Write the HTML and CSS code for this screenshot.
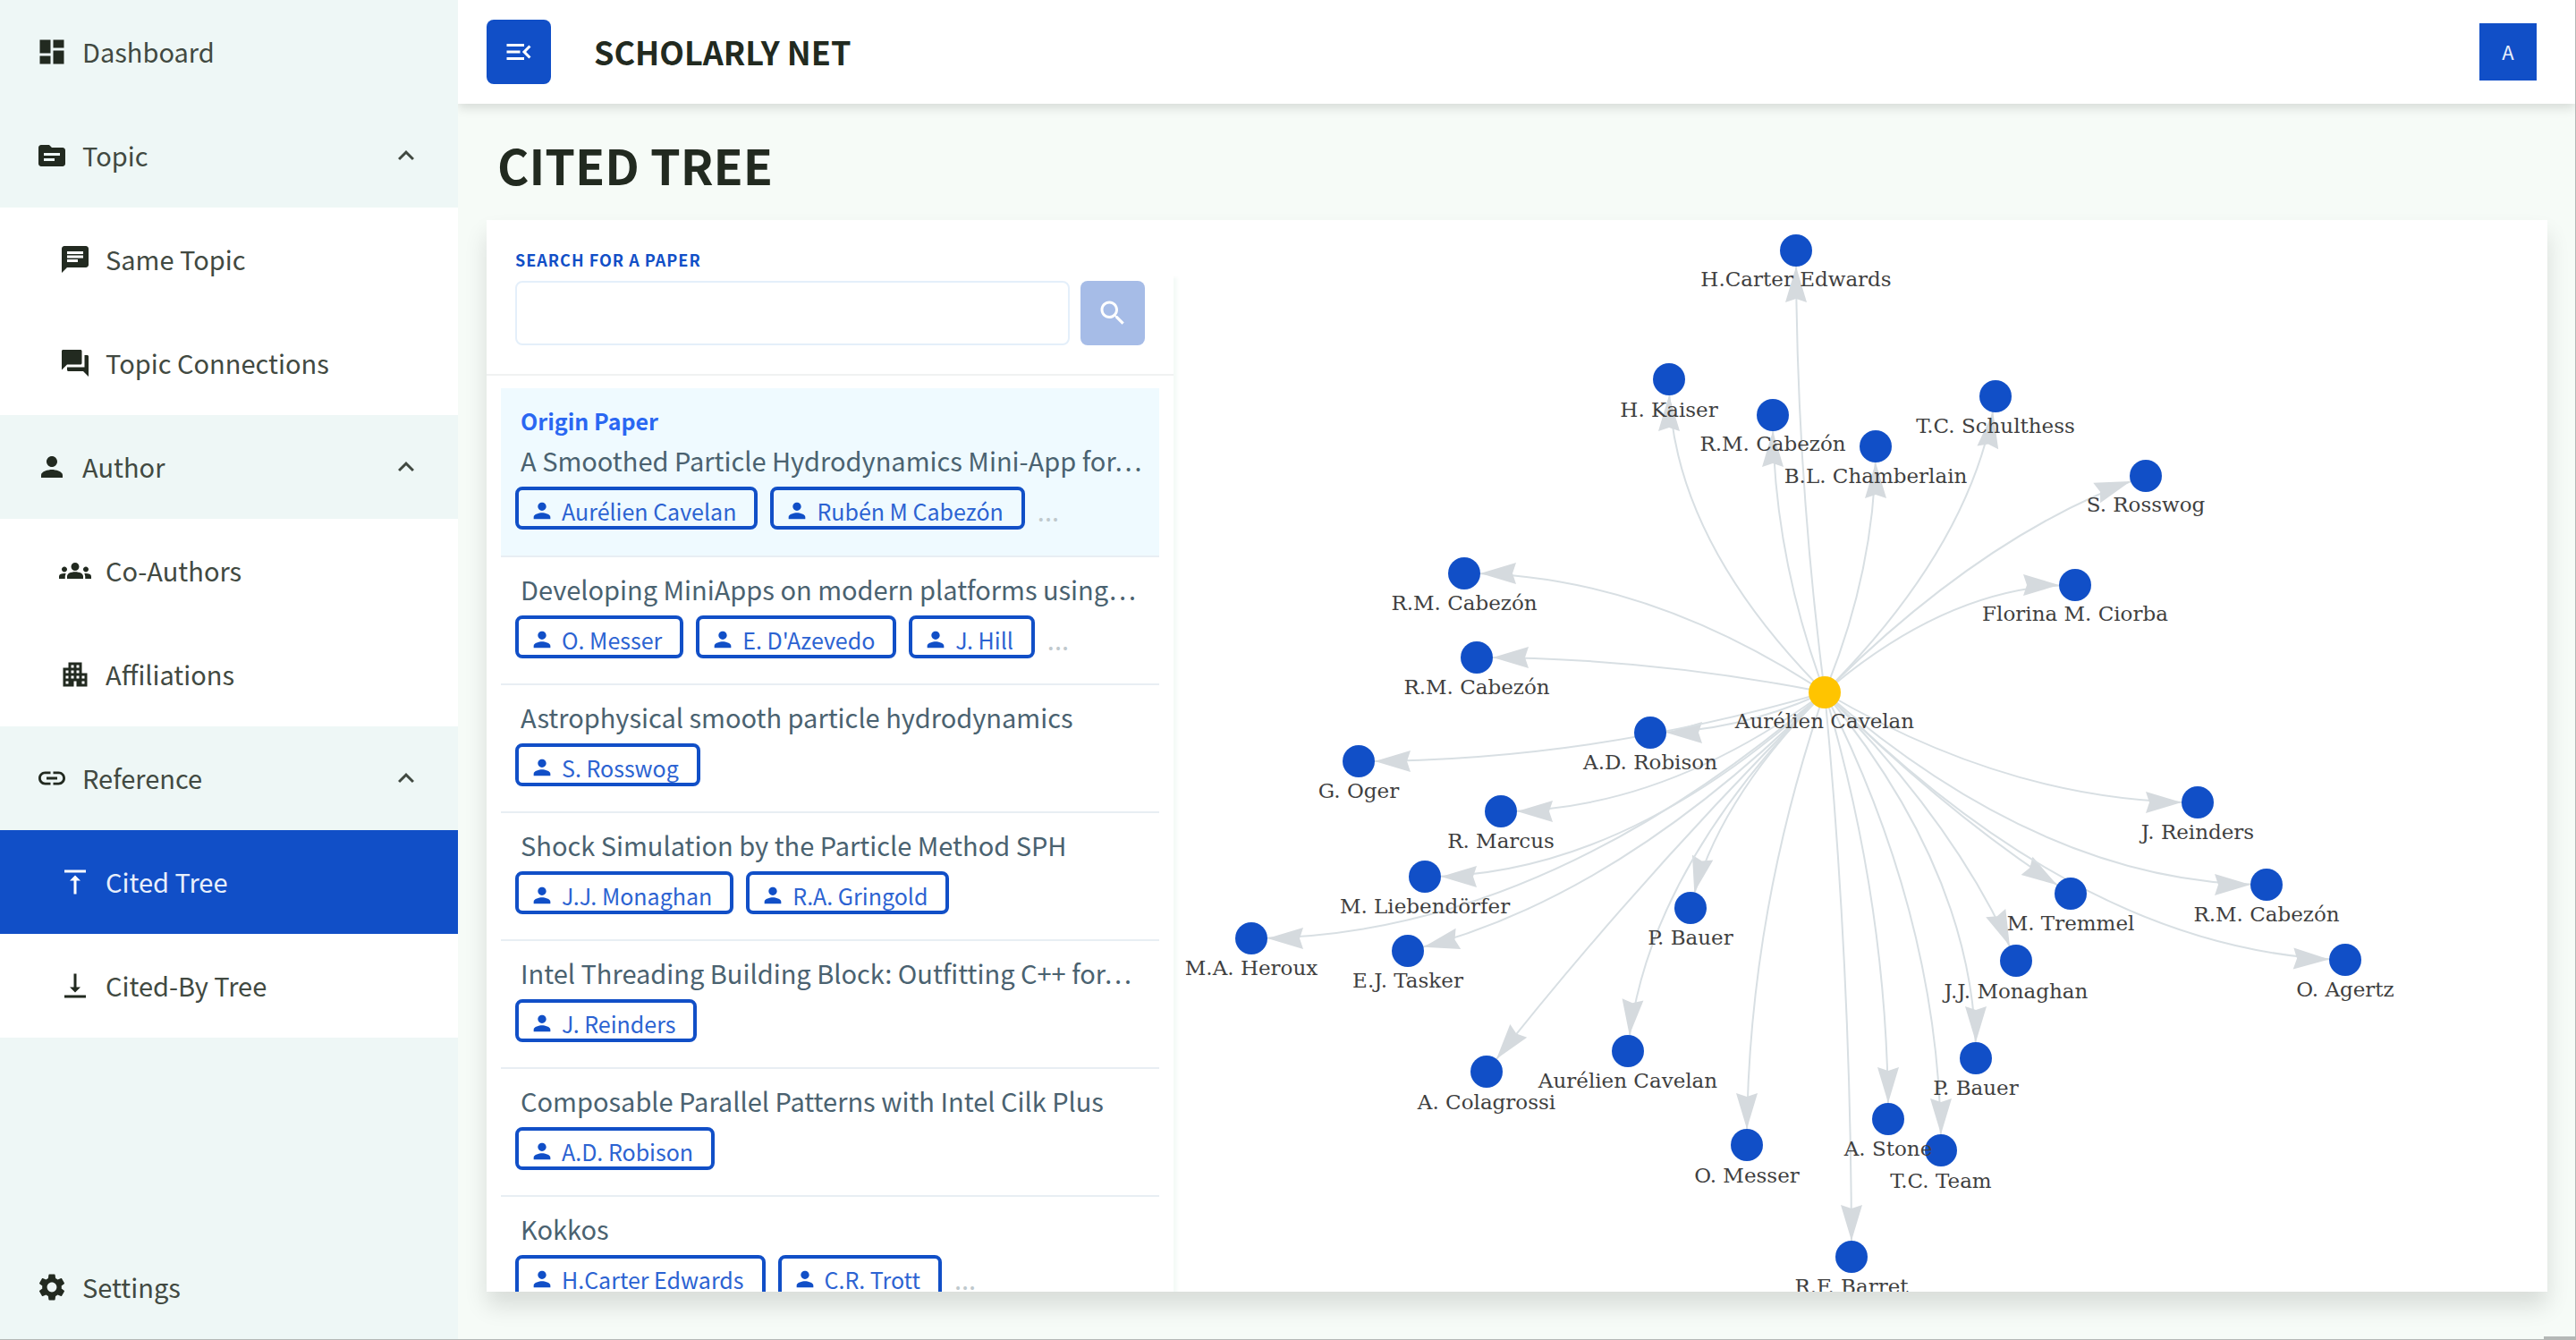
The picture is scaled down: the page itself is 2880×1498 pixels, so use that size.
FILE: index.html
```html
<!DOCTYPE html>
<html lang="en">
<head>
<meta charset="utf-8">
<meta name="viewport" content="width=device-width, initial-scale=1">
<title>Scholarly Net - Cited Tree</title>
<link rel="stylesheet" href="styles.css">
</head>
<body>
<svg class="sprite" aria-hidden="true">
  <symbol id="i-person" viewBox="0 0 24 24"><path d="M12 12c2.21 0 4-1.79 4-4s-1.79-4-4-4-4 1.79-4 4 1.79 4 4 4zm0 2c-2.67 0-8 1.34-8 4v2h16v-2c0-2.660-5.330-4-8-4z"/></symbol>
  <symbol id="i-up" viewBox="0 0 24 24"><path d="M7.410 15.410 12 10.830l4.590 4.580L18 14l-6-6-6 6z"/></symbol>
</svg>

<nav class="sidebar" aria-label="Main">
  <a class="item" href="#dashboard"><svg class="icon" viewBox="0 0 24 24"><path d="M3 13h8V3H3v10zm0 8h8v-6H3v6zm10 0h8V11h-8v10zm0-18v6h8V3h-8z"/></svg><span>Dashboard</span></a>

  <button class="item" type="button" aria-expanded="true"><svg class="icon" viewBox="0 0 24 24"><path d="M20 6h-8l-2-2H4c-1.100 0-1.990.9-1.990 2L2 18c0 1.100.9 2 2 2h16c1.100 0 2-.9 2-2V8c0-1.100-.9-2-2-2zm-6 10H6v-2h8v2zm4-4H6v-2h12v2z"/></svg><span>Topic</span><svg class="chevron"><use href="#i-up"/></svg></button>
  <div class="group">
    <a class="item sub" href="#same-topic"><svg class="icon" viewBox="0 0 24 24"><path d="M20 2H4c-1.100 0-1.990.9-1.990 2L2 22l4-4h14c1.100 0 2-.9 2-2V4c0-1.100-.9-2-2-2zm-6 12H6v-2h8v2zm4-3H6V9h12v2zm0-3H6V6h12v2z"/></svg><span>Same Topic</span></a>
    <a class="item sub" href="#topic-connections"><svg class="icon" viewBox="0 0 24 24"><path d="M21 6h-2v9H6v2c0 .55.45 1 1 1h11l4 4V7c0-.55-.45-1-1-1zm-4 6V3c0-.55-.45-1-1-1H3c-.55 0-1 .45-1 1v14l4-4h10c.55 0 1-.45 1-1z"/></svg><span>Topic Connections</span></a>
  </div>

  <button class="item" type="button" aria-expanded="true"><svg class="icon"><use href="#i-person"/></svg><span>Author</span><svg class="chevron"><use href="#i-up"/></svg></button>
  <div class="group">
    <a class="item sub" href="#co-authors"><svg class="icon" viewBox="0 0 24 24"><path d="M12 12.750c1.630 0 3.070.390 4.240.9 1.080.480 1.760 1.560 1.760 2.730V18H6v-1.610c0-1.180.68-2.260 1.760-2.730 1.170-.52 2.610-.91 4.240-.91zM4 13c1.100 0 2-.9 2-2s-.9-2-2-2-2 .9-2 2 .9 2 2 2zm1.130 1.100C4.760 14.040 4.390 14 4 14c-.99 0-1.930.21-2.780.58C.48 14.900 0 15.620 0 16.430V18h4.500v-1.610c0-.83.23-1.610.63-2.290zM20 13c1.100 0 2-.9 2-2s-.9-2-2-2-2 .9-2 2 .9 2 2 2zm4 3.430c0-.81-.48-1.530-1.220-1.850C21.930 14.210 20.990 14 20 14c-.39 0-.76.040-1.130.1.4.68.63 1.460.63 2.290V18H24v-1.570zM12 6c1.660 0 3 1.340 3 3s-1.340 3-3 3-3-1.340-3-3 1.340-3 3-3z"/></svg><span>Co-Authors</span></a>
    <a class="item sub" href="#affiliations"><svg class="icon" viewBox="0 0 24 24"><path d="M17 11V3H7v4H3v14h8v-4h2v4h8V11h-4zM7 19H5v-2h2v2zm0-4H5v-2h2v2zm0-4H5V9h2v2zm4 4H9v-2h2v2zm0-4H9V9h2v2zm0-4H9V5h2v2zm4 8h-2v-2h2v2zm0-4h-2V9h2v2zm0-4h-2V5h2v2zm4 12h-2v-2h2v2zm0-4h-2v-2h2v2z"/></svg><span>Affiliations</span></a>
  </div>

  <button class="item" type="button" aria-expanded="true"><svg class="icon" viewBox="0 0 24 24"><path d="M3.900 12c0-1.710 1.390-3.100 3.100-3.100h4V7H7c-2.760 0-5 2.240-5 5s2.240 5 5 5h4v-1.900H7c-1.710 0-3.100-1.390-3.100-3.100zM8 13h8v-2H8v2zm9-6h-4v1.900h4c1.710 0 3.100 1.390 3.100 3.100s-1.390 3.100-3.100 3.100h-4V17h4c2.760 0 5-2.240 5-5s-2.240-5-5-5z"/></svg><span>Reference</span><svg class="chevron"><use href="#i-up"/></svg></button>
  <div class="group">
    <a class="item sub active" href="#cited-tree" aria-current="page"><svg class="icon" viewBox="0 0 24 24"><path d="M8 11h3v10h2V11h3l-4-4-4 4zM4 3v2h16V3H4z"/></svg><span>Cited Tree</span></a>
    <a class="item sub" href="#cited-by-tree"><svg class="icon" viewBox="0 0 24 24"><path d="M16 13h-3V3h-2v10H8l4 4 4-4zM4 19v2h16v-2H4z"/></svg><span>Cited-By Tree</span></a>
  </div>

  <a class="item settings" href="#settings"><svg class="icon" viewBox="0 0 24 24"><path d="M19.140 12.940c.04-.3.06-.61.06-.94 0-.32-.02-.64-.07-.94l2.030-1.580c.18-.14.23-.41.12-.61l-1.920-3.320c-.12-.22-.37-.29-.59-.22l-2.390.96c-.5-.38-1.030-.7-1.620-.94l-.36-2.540c-.04-.24-.24-.41-.48-.41h-3.840c-.24 0-.43.17-.47.41l-.36 2.540c-.59.24-1.130.57-1.620.94l-2.390-.96c-.22-.08-.47 0-.59.22L2.740 8.870c-.12.21-.08.47.12.61l2.030 1.580c-.05.3-.09.63-.09.94s.02.64.07.94l-2.030 1.580c-.18.14-.23.41-.12.61l1.920 3.320c.12.22.37.29.59.22l2.390-.96c.5.38 1.030.7 1.620.94l.36 2.540c.05.24.24.41.48.41h3.840c.24 0 .44-.17.47-.41l.36-2.540c.59-.24 1.130-.56 1.620-.94l2.390.96c.22.08.47 0 .59-.22l1.920-3.320c.12-.22.07-.47-.12-.61l-2.010-1.580zM12 15.600c-1.980 0-3.600-1.620-3.600-3.600s1.620-3.600 3.600-3.600 3.600 1.620 3.600 3.600-1.620 3.600-3.600 3.600z"/></svg><span>Settings</span></a>
</nav>

<div class="page">
  <header class="topbar">
    <button class="menu" type="button" aria-label="Collapse menu"><svg viewBox="0 0 24 24"><path d="M3 18h13v-2H3v2zm0-5h10v-2H3v2zm0-7v2h13V6H3zm18 9.590L17.420 12 21 8.410 19.590 7l-5 5 5 5L21 15.590z"/></svg></button>
    <span class="brand">SCHOLARLY NET</span>
    <button class="avatar" type="button" aria-label="Account">A</button>
  </header>

  <main class="content">
    <h1>CITED TREE</h1>
    <div class="card">
      <section class="papers">
        <form class="search">
          <label for="paper">SEARCH FOR A PAPER</label>
          <div class="search-row">
            <input id="paper" type="text">
            <button type="button" aria-label="Search"><svg viewBox="0 0 24 24"><path d="M15.500 14h-.79l-.28-.27C15.410 12.590 16 11.110 16 9.500 16 5.910 13.090 3 9.500 3S3 5.910 3 9.500 5.910 16 9.500 16c1.610 0 3.090-.59 4.230-1.570l.27.28v.79l5 4.990L20.490 19l-4.990-5zm-6 0C7.010 14 5 11.990 5 9.500S7.010 5 9.500 5 14 7.010 14 9.500 11.990 14 9.500 14z"/></svg></button>
          </div>
        </form>
        <ul class="list">
          <li class="origin"><strong>Origin Paper</strong><h2>A Smoothed Particle Hydrodynamics Mini-App for…</h2>
            <div class="chips"><button type="button" class="chip"><svg><use href="#i-person"/></svg>Aurélien Cavelan</button><button type="button" class="chip"><svg><use href="#i-person"/></svg>Rubén M Cabezón</button><span class="more">...</span></div></li>
          <li><h2>Developing MiniApps on modern platforms using…</h2>
            <div class="chips"><button type="button" class="chip"><svg><use href="#i-person"/></svg>O. Messer</button><button type="button" class="chip"><svg><use href="#i-person"/></svg>E. D'Azevedo</button><button type="button" class="chip"><svg><use href="#i-person"/></svg>J. Hill</button><span class="more">...</span></div></li>
          <li><h2>Astrophysical smooth particle hydrodynamics</h2>
            <div class="chips"><button type="button" class="chip"><svg><use href="#i-person"/></svg>S. Rosswog</button></div></li>
          <li><h2>Shock Simulation by the Particle Method SPH</h2>
            <div class="chips"><button type="button" class="chip"><svg><use href="#i-person"/></svg>J.J. Monaghan</button><button type="button" class="chip"><svg><use href="#i-person"/></svg>R.A. Gringold</button></div></li>
          <li><h2>Intel Threading Building Block: Outfitting C++ for…</h2>
            <div class="chips"><button type="button" class="chip"><svg><use href="#i-person"/></svg>J. Reinders</button></div></li>
          <li><h2>Composable Parallel Patterns with Intel Cilk Plus</h2>
            <div class="chips"><button type="button" class="chip"><svg><use href="#i-person"/></svg>A.D. Robison</button></div></li>
          <li><h2>Kokkos</h2>
            <div class="chips"><button type="button" class="chip"><svg><use href="#i-person"/></svg>H.Carter Edwards</button><button type="button" class="chip"><svg><use href="#i-person"/></svg>C.R. Trott</button><span class="more">...</span></div></li>
        </ul>
      </section>

      <svg class="graph" viewBox="1312 246 1536 1198" role="img" aria-label="Citation graph of Aurélien Cavelan">
        <defs>
          <marker id="arrow" markerUnits="userSpaceOnUse" markerWidth="40" markerHeight="24" viewBox="0 0 40 24" refX="58" refY="12" orient="auto" overflow="visible"><path class="head" d="M40 12 0 0l4 12-4 12z"/></marker>
        </defs>
        <g class="edges">
          <path d="M2040 774Q2008 527 2008 280"/>
          <path d="M2040 774Q1866 599 1866 424"/>
          <path d="M2040 774Q1982 619 1982 464"/>
          <path d="M2040 774Q2097 636 2097 499"/>
          <path d="M2040 774Q2206 608 2231 443"/>
          <path d="M2040 774Q2220 594 2399 532"/>
          <path d="M2040 774Q2180 654 2320 654"/>
          <path d="M2040 774Q1838 641 1637 641"/>
          <path d="M2040 774Q1845 735 1651 735"/>
          <path d="M2040 774Q1942 819 1845 819"/>
          <path d="M2040 774Q1779 851 1519 851"/>
          <path d="M2040 774Q1859 907 1678 907"/>
          <path d="M2040 774Q1816 980 1593 980"/>
          <path d="M2040 774Q1719 1049 1399 1049"/>
          <path d="M2040 774Q1807 1007 1574 1063"/>
          <path d="M2040 774Q1919 895 1890 1015"/>
          <path d="M2040 774Q1828 986 1662 1198"/>
          <path d="M2040 774Q1839 975 1820 1175"/>
          <path d="M2040 774Q1953 1027 1953 1280"/>
          <path d="M2040 774Q2070 1090 2070 1405"/>
          <path d="M2040 774Q2111 1013 2111 1251"/>
          <path d="M2040 774Q2170 1030 2170 1286"/>
          <path d="M2040 774Q2209 979 2209 1183"/>
          <path d="M2040 774Q2190 924 2254 1074"/>
          <path d="M2040 774Q2178 912 2315 999"/>
          <path d="M2040 774Q2249 897 2457 897"/>
          <path d="M2040 774Q2287 989 2534 989"/>
          <path d="M2040 774Q2331 1065 2622 1073"/>
        </g>
        <g class="nodes">
          <circle cx="2008" cy="280" r="18"/><circle cx="1866" cy="424" r="18"/><circle cx="1982" cy="464" r="18"/><circle cx="2097" cy="499" r="18"/>
          <circle cx="2231" cy="443" r="18"/><circle cx="2399" cy="532" r="18"/><circle cx="2320" cy="654" r="18"/><circle cx="1637" cy="641" r="18"/>
          <circle cx="1651" cy="735" r="18"/><circle cx="1845" cy="819" r="18"/><circle cx="1519" cy="851" r="18"/><circle cx="1678" cy="907" r="18"/>
          <circle cx="1593" cy="980" r="18"/><circle cx="1399" cy="1049" r="18"/><circle cx="1574" cy="1063" r="18"/><circle cx="1890" cy="1015" r="18"/>
          <circle cx="1662" cy="1198" r="18"/><circle cx="1820" cy="1175" r="18"/><circle cx="1953" cy="1280" r="18"/><circle cx="2070" cy="1405" r="18"/>
          <circle cx="2111" cy="1251" r="18"/><circle cx="2170" cy="1286" r="18"/><circle cx="2209" cy="1183" r="18"/><circle cx="2254" cy="1074" r="18"/>
          <circle cx="2315" cy="999" r="18"/><circle cx="2457" cy="897" r="18"/><circle cx="2534" cy="989" r="18"/><circle cx="2622" cy="1073" r="18"/>
          <circle class="root" cx="2040" cy="774" r="18"/>
        </g>
        <g class="names">
          <text x="2008" y="320">H.Carter Edwards</text><text x="1866" y="466">H. Kaiser</text><text x="1982" y="504">R.M. Cabezón</text><text x="2097" y="540">B.L. Chamberlain</text>
          <text x="2231" y="484">T.C. Schulthess</text><text x="2399" y="572">S. Rosswog</text><text x="2320" y="694">Florina M. Ciorba</text><text x="1637" y="682">R.M. Cabezón</text>
          <text x="1651" y="776">R.M. Cabezón</text><text x="1845" y="860">A.D. Robison</text><text x="1519" y="892">G. Oger</text><text x="1678" y="948">R. Marcus</text>
          <text x="1593" y="1021">M. Liebendörfer</text><text x="1399" y="1090">M.A. Heroux</text><text x="1574" y="1104">E.J. Tasker</text><text x="1890" y="1056">P. Bauer</text>
          <text x="1662" y="1240">A. Colagrossi</text><text x="1820" y="1216">Aurélien Cavelan</text><text x="1953" y="1322">O. Messer</text><text x="2070" y="1446">R.F. Barret</text>
          <text x="2111" y="1292">A. Stone</text><text x="2170" y="1328">T.C. Team</text><text x="2209" y="1224">P. Bauer</text><text x="2254" y="1116">J.J. Monaghan</text>
          <text x="2315" y="1040">M. Tremmel</text><text x="2457" y="938">J. Reinders</text><text x="2534" y="1030">R.M. Cabezón</text><text x="2622" y="1114">O. Agertz</text>
          <text x="2040" y="814">Aurélien Cavelan</text>
        </g>
      </svg>
    </div>
  </main>
</div>
</body>
</html>
```
FILE: styles.css
```css
:root {
  --blue: #114fc7;
  --ink: #222a20;
  --text: #414941;
}

* { box-sizing: border-box; }

body {
  display: flex;
  height: 100vh;
  margin: 0;
  border: solid #b4b8b6;
  border-width: 0 1px 1px 0;
  background: #f6fbf7;
  color: var(--ink);
  font-family: "Noto Sans CJK JP", "Noto Sans", sans-serif;
  font-size: 29px;
  overflow: hidden;
}

/* Scroll handle in the window's lower right corner */
body::after {
  content: "";
  position: absolute;
  right: 0;
  bottom: 0;
  width: 36px;
  height: 4px;
  background: #b4b8b6;
}

button, input { font: inherit; }
button { cursor: pointer; }
svg { fill: currentColor; }
.sprite { display: none; }

/* Sidebar */
.sidebar {
  position: relative;
  z-index: 1;
  display: flex;
  flex: none;
  flex-direction: column;
  width: 512px;
  background: #eef7f6;
}
.item {
  display: flex;
  flex: none;
  align-items: center;
  gap: 16px;
  width: 100%;
  height: 116px;
  padding: 0 40px;
  border: 0;
  background: none;
  color: var(--text);
  line-height: 44px;
  text-align: left;
  text-decoration: none;
}
.item span { padding-bottom: 2px; }
.item .icon { flex: none; width: 36px; height: 36px; color: var(--ink); }
.chevron { width: 36px; height: 36px; margin-left: auto; }
.group { background: #fff; }
.sub { padding-left: 66px; }
.item.active { background: var(--blue); color: #e8effb; }
.item.active .icon { color: #fff; }
.settings { margin-top: auto; }

/* Top bar */
.page { display: flex; flex: 1; flex-direction: column; min-width: 0; }
.topbar {
  display: flex;
  flex: none;
  align-items: center;
  height: 116px;
  padding: 0 43px 0 32px;
  background: #fff;
  box-shadow: 0 4px 12px rgba(0, 0, 0, .14);
}
.menu {
  display: grid;
  place-items: center;
  width: 72px;
  height: 72px;
  margin-right: 48px;
  padding: 0;
  border: 0;
  border-radius: 8px;
  background: var(--blue);
  color: #fff;
}
.menu svg { width: 36px; height: 36px; }
.brand { padding-bottom: 2px; font-size: 36px; font-weight: 700; line-height: 52px; }
.avatar {
  width: 64px;
  height: 64px;
  margin-left: auto;
  padding: 0 0 2px;
  border: 0;
  background: var(--blue);
  color: #e8effb;
  font-size: 22px;
}

/* Content */
.content { display: flex; flex: 1; flex-direction: column; min-height: 0; padding: 0 31px 53px 32px; }
h1 { margin: 30px 0 24px; padding-left: 12px; font-size: 54px; font-weight: 700; line-height: 76px; }
.card {
  display: flex;
  flex: 1;
  min-height: 0;
  background: #fff;
  box-shadow: 0 16px 24px rgba(0, 0, 0, .12);
  overflow: hidden;
}
.papers {
  display: flex;
  flex: none;
  flex-direction: column;
  width: 33.333%;
  overflow: hidden;
  box-shadow: 4px 64px 4px #f4faf7;
}
.search { padding: 28px 32px 32px; border-bottom: 2px solid #f0f2f2; }
.search label {
  display: block;
  margin-bottom: 8px;
  color: var(--blue);
  font-size: 18px;
  font-weight: 700;
  letter-spacing: 1px;
  line-height: 32px;
}
.search-row { display: flex; gap: 12px; }
.search input {
  flex: 1;
  min-width: 0;
  height: 72px;
  padding: 0 16px;
  border: 2px solid #e4effa;
  border-radius: 8px;
  background: #fff;
}
.search button {
  display: grid;
  place-items: center;
  width: 72px;
  height: 72px;
  padding: 0;
  border: 0;
  border-radius: 8px;
  background: #a6bce7;
  color: #fff;
}
.search button svg { width: 36px; height: 36px; }

.list { flex: 1; min-height: 0; margin: 0; padding: 14px 16px 0; overflow: hidden; list-style: none; }
.list li { padding: 15px 16px 28px; border-bottom: 2px solid #e8eef3; }
.list .origin { padding: 12px 16px 29px; background: #effaff; }
.origin strong { display: block; padding: 0 6px; color: #2a67f2; font-size: 25px; font-weight: 700; line-height: 48px; }
.list h2 {
  margin: 0 0 10px;
  padding: 0 6px;
  color: #4a6270;
  font-size: 29px;
  font-weight: 400;
  line-height: 40px;
  white-space: nowrap;
}
.chips { display: flex; gap: 14px; }
.chip {
  display: flex;
  align-items: center;
  gap: 8px;
  height: 48px;
  padding: 6px 20px 0 12px;
  border: 4px solid var(--blue);
  border-radius: 8px;
  background: none;
  color: #2c63d2;
  font-size: 25px;
  line-height: 32px;
  white-space: nowrap;
}
.chip svg { width: 28px; height: 28px; color: var(--blue); }
.more { height: 48px; color: #bfc9cd; line-height: 52px; }

/* Citation graph */
.graph { display: block; flex: 1; min-width: 0; height: 100%; }
.edges path { fill: none; stroke: #d8dfe3; stroke-width: 2; marker-end: url(#arrow); }
.edges .head, .head { fill: #d5dade; stroke: none; marker-end: none; }
.nodes { fill: var(--blue); }
.root { fill: #ffc400; }
.names { fill: #3f3f3f; font-family: "DejaVu Serif", serif; font-size: 23px; text-anchor: middle; }
```
